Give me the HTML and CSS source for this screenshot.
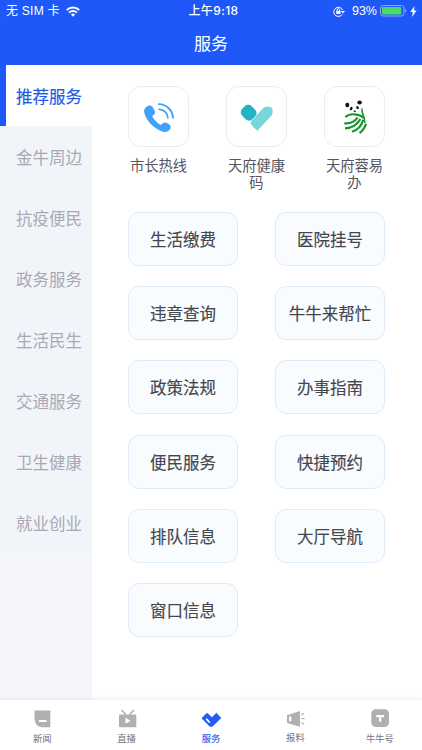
FILE: index.html
```html
<!DOCTYPE html>
<html lang="zh-CN">
<head>
    <meta charset="UTF-8">
    <meta name="viewport" content="width=device-width, initial-scale=1.0">
    <title>服务</title>
    <link rel="stylesheet" href="styles.css">
</head>
<body>
    <header class="header">
        <div class="status-bar">
            <div class="status-left">
                <span>无 SIM 卡</span>
                <svg class="wifi" width="14" height="11" viewBox="0 0 14 11">
                    <g fill="none" stroke="#fff" stroke-width="1.9">
                        <path d="M0.7 4.1a9 9 0 0 1 12.6 0"/>
                        <path d="M3 6.6a5.8 5.8 0 0 1 8 0"/>
                    </g>
                    <path fill="#fff" d="M7 10.8L4.9 8.6a3 3 0 0 1 4.2 0z"/>
                </svg>
            </div>
            <div class="status-time">上午9:18</div>
            <div class="status-right">
                <svg width="12" height="11" viewBox="0 0 12 11">
                    <path d="M9.3 8.3A4.6 4.6 0 1 1 9.7 4.2" fill="none" stroke="#fff" stroke-width="1"/>
                    <path d="M8 4.9h4L10 7.4z" fill="#fff"/>
                    <rect x="3.2" y="4.8" width="4.4" height="3.2" rx="0.4" fill="#fff"/>
                    <path d="M4.1 5V3.9a1.3 1.3 0 0 1 2.6 0V5" fill="none" stroke="#fff" stroke-width="0.9"/>
                </svg>
                <span class="percent">93%</span>
                <svg width="27" height="12" viewBox="0 0 27 12">
                    <rect x="0.5" y="0.5" width="23.5" height="10.5" rx="2.6" fill="none" stroke="#8ea9ff"/>
                    <rect x="2" y="2" width="19.3" height="7.5" rx="1" fill="#4cd964"/>
                    <path d="M25 4a2 2 0 0 1 0 3.6z" fill="#8ea9ff"/>
                </svg>
                <svg class="bolt" width="7" height="11" viewBox="0 0 7 11">
                    <path d="M4.6 0L0.2 6h2.6L1.9 11 6.7 4.6H4z" fill="#fff"/>
                </svg>
            </div>
        </div>
        <h1 class="title">服务</h1>
    </header>

    <main class="main">
        <nav class="sidebar">
            <a class="side-item active">推荐服务</a>
            <a class="side-item">金牛周边</a>
            <a class="side-item">抗疫便民</a>
            <a class="side-item">政务服务</a>
            <a class="side-item">生活民生</a>
            <a class="side-item">交通服务</a>
            <a class="side-item">卫生健康</a>
            <a class="side-item">就业创业</a>
        </nav>

        <section class="content">
            <div class="apps">
                <div class="app">
                    <div class="app-icon">
                        <svg width="60" height="60" viewBox="0 0 60 60">
                            <path fill="#3fa2fb" d="M17.6 19.7c2.3-1.8 4.8-1.5 6 .4l2 3.3c1 1.700.4 3.700-1.400 4.800-.9.600-1 1.200-.5 2 2 3.100 4.200 5.400 7.200 7.300.8.500 1.500.4 2.100-.4 1.300-1.600 3.200-2 4.800-1l2.500 1.500c1.800 1.200 1.900 3.500.4 5.200-2.200 2.500-5.300 2.900-8.800 1.300-8-3.600-14.300-10.200-16.500-17.800-.8-2.800-.1-5 2.200-6.600z"/>
                            <g fill="none" stroke="#3fa2fb" stroke-width="1.8" stroke-linecap="round">
                                <path d="M30 17.2c7.600.2 13.700 6 14 13.700"/>
                                <path d="M30.300 22.300c4.700.2 8.300 3.700 8.500 8.300"/>
                            </g>
                        </svg>
                    </div>
                    <div class="app-name">市长热线</div>
                </div>
                <div class="app">
                    <div class="app-icon">
                        <svg width="60" height="60" viewBox="0 0 60 60">
                            <rect x="14.3" y="19" width="14.8" height="13.5" rx="5" transform="rotate(45 21.7 25.7)" fill="#1fb5c4"/>
                            <path d="M30.3 44.2L24.2 38q-1.9-2.1 0-4.2L36 21q1.4-1.6 3.3-1.6h2.600q4 0 4 4v2.200q0 1.900-1.400 3.400z" fill="#76d6d9" stroke="#fff" stroke-width="0.6"/>
                        </svg>
                    </div>
                    <div class="app-name">天府健康码</div>
                </div>
                <div class="app">
                    <div class="app-icon">
                        <svg width="60" height="60" viewBox="0 0 60 60">
                            <path d="M22.5 18c3-4 10-4.5 13-1.5 1.5 4-1 8.5-5.500 9.500-5 .5-8-4-7.500-8z" fill="#fff" stroke="#e4e4e4" stroke-width="0.5"/>
                            <g fill="#111">
                                <ellipse cx="22.3" cy="18" rx="2" ry="2.2"/>
                                <ellipse cx="34.6" cy="15.4" rx="2.3" ry="2"/>
                                <ellipse cx="26.2" cy="21.6" rx="1.3" ry="1.8" transform="rotate(30 26.2 21.6)"/>
                                <ellipse cx="32.5" cy="20.6" rx="1.2" ry="1.6" transform="rotate(-35 32.5 20.6)"/>
                                <ellipse cx="29.8" cy="24.3" rx="1.2" ry="0.8"/>
                            </g>
                            <g fill="none" stroke="#17962f" stroke-width="2.2">
                                <path d="M20.3 30c5-4.300 14-3.300 19 1.200"/>
                                <path d="M19.3 36.300c6.200.6 10.600-1.700 13.300-5.800"/>
                                <path d="M20 41.400c7.400-.7 12.400-4 15.300-9.500"/>
                                <path d="M27 44.800c5.800-1.800 9.500-5.700 11.200-12"/>
                                <path d="M34.500 46c3.300-2.300 5.300-5.200 6.500-9.300"/>
                                <path d="M37 21.500c-.8 5.500 3.300 8.500 2.800 14.500" stroke-width="1.5"/>
                            </g>
                        </svg>
                    </div>
                    <div class="app-name">天府蓉易办</div>
                </div>
            </div>

            <div class="services">
                <button class="service">生活缴费</button>
                <button class="service">医院挂号</button>
                <button class="service">违章查询</button>
                <button class="service">牛牛来帮忙</button>
                <button class="service">政策法规</button>
                <button class="service">办事指南</button>
                <button class="service">便民服务</button>
                <button class="service">快捷预约</button>
                <button class="service">排队信息</button>
                <button class="service">大厅导航</button>
                <button class="service">窗口信息</button>
            </div>
        </section>
    </main>

    <footer class="tab-bar">
        <a class="tab">
            <svg width="20" height="20" viewBox="0 0 20 20">
                <path fill="#b0b0b0" d="M2.5 1.500h15.800v16.800h-8a7.800 7.800 0 0 1-7.800-7.800z"/>
                <rect x="7" y="11" width="7.5" height="2" fill="#fff"/>
            </svg>
            <span>新闻</span>
        </a>
        <a class="tab">
            <svg width="20" height="20" viewBox="0 0 20 20">
                <path d="M4.5 1l4.3 4.500M17 1l-4.500 4.500" stroke="#b0b0b0" stroke-width="1.6"/>
                <rect x="2" y="5.5" width="17.3" height="12.7" rx="1" fill="#b0b0b0"/>
                <path d="M8.5 8.700v6l5-3z" fill="#fff"/>
            </svg>
            <span>直播</span>
        </a>
        <a class="tab active">
            <svg width="22" height="20" viewBox="0 0 22 20">
                <path fill="#265cf2" d="M1.500 9.200L7 3.800l5 4.500 4.300-4.500 5 5.200-8.200 8q-2 1.700-4 0z"/>
                <path d="M6.700 10.300l2.500 2.700" stroke="#fff" stroke-width="1.8" stroke-linecap="round"/>
            </svg>
            <span>服务</span>
        </a>
        <a class="tab">
            <svg width="20" height="20" viewBox="0 0 20 20">
                <path fill="#b0b0b0" d="M2 6.300L15 2v15.700L2 14z"/>
                <rect x="4" y="7.5" width="2.3" height="4.7" fill="#fff"/>
                <path d="M16.300 6l2.700-1.700M16.500 9.700h3M16.300 13.500l2.700 1.700" stroke="#b0b0b0" stroke-width="1.3"/>
            </svg>
            <span class="raised">报料</span>
        </a>
        <a class="tab">
            <svg width="20" height="20" viewBox="0 0 20 20">
                <rect x="1.3" y="0.3" width="17.7" height="17.7" rx="4.5" fill="#b0b0b0"/>
                <path d="M6.300 7.100h7.700M10.200 7.100v5.600" stroke="#fff" stroke-width="2.2"/>
            </svg>
            <span>牛牛号</span>
        </a>
    </footer>
</body>
</html>
```

FILE: styles.css
```css
* {
    box-sizing: border-box;
}

body {
    display: flex;
    flex-direction: column;
    height: 750px;
    margin: 0;
    overflow: hidden;
    background: #fff;
    font-family: "Liberation Sans", "Noto Sans CJK SC", sans-serif;
}

svg {
    display: block;
}

.header {
    flex: none;
    height: 65px;
    background: #1e58f8;
    color: #fff;
}

.status-bar {
    display: grid;
    grid-template-columns: 1fr auto 1fr;
    align-items: center;
    height: 22px;
    padding: 0 5px 0 6px;
    font-size: 12px;
    line-height: 20px;
}

.status-left,
.status-right {
    display: flex;
    align-items: center;
}

.status-left {
    gap: 6px;
    letter-spacing: 0.25px;
}

.status-time {
    padding-left: 4px;
    font-family: Inter, "Noto Sans CJK SC", sans-serif;
    font-weight: 500;
    letter-spacing: 0.4px;
}

.status-right {
    justify-content: flex-end;
}

.percent {
    margin: 0 3px 0 7px;
    font-size: 12.5px;
}

.bolt {
    margin-left: 3px;
}

.title {
    margin: 0;
    padding-top: 1px;
    font-size: 17px;
    font-weight: 400;
    line-height: 43px;
    text-align: center;
}

.main {
    display: flex;
    flex: 1;
    min-height: 0;
}

.sidebar {
    width: 92px;
    background: #f5f6f9;
}

.side-item {
    display: flex;
    align-items: center;
    height: 61px;
    padding-left: 16px;
    background: #f1f5f9;
    color: #aaa8b5;
    font-size: 16.5px;
    white-space: nowrap;
}

.side-item.active {
    padding-left: 10px;
    border-left: 6px solid #1e58f8;
    background: #fff;
    color: #2159e5;
    -webkit-text-stroke: 0.15px #2159e5;
}

.content {
    flex: 1;
    padding: 21px 36px 0;
}

.apps {
    display: flex;
    gap: 37px;
    height: 126px;
}

.app {
    width: 61px;
}

.app-icon {
    width: 61px;
    height: 61px;
    border: 1px solid #ececef;
    border-radius: 13px;
}

.app-name {
    width: 61px;
    margin-top: 11px;
    color: #55565f;
    font-size: 14.3px;
    line-height: 17px;
    text-align: center;
}

.services {
    display: grid;
    grid-template-columns: 110px 110px;
    grid-auto-rows: 54px;
    gap: 20.2px 37px;
}

.service {
    padding: 0;
    border: 1px solid #deebf8;
    border-radius: 11px;
    background: #f9fcff;
    color: #44464f;
    font-family: inherit;
    font-size: 16.5px;
    -webkit-text-stroke: 0.15px #44464f;
}

.tab-bar {
    display: flex;
    flex: none;
    height: 50px;
    background: #fff;
    box-shadow: 0 -1px 5px rgba(0, 0, 0, 0.08);
    z-index: 1;
}

.tab {
    display: flex;
    flex: 1;
    flex-direction: column;
    align-items: center;
    padding-top: 9px;
    color: #73747f;
    font-size: 9.3px;
    line-height: 14px;
}

.tab span {
    margin-top: 3px;
}

.tab .raised {
    margin-top: 2px;
}

.tab.active {
    color: #265cf2;
    -webkit-text-stroke: 0.1px #265cf2;
}
```
